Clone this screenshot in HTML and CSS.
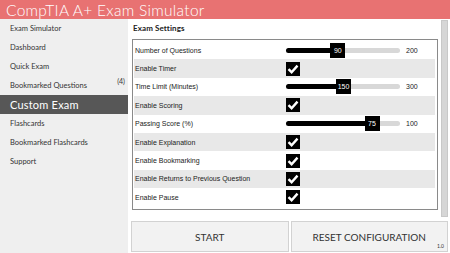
FILE: index.html
```html
<!DOCTYPE html>
<html>
<head>
<meta charset="utf-8">
<link rel="stylesheet" href="styles.css">
</head>
<body>
<div class="app">
  <div class="header">CompTIA A+ Exam Simulator</div>
  <div class="content">
    <div class="sidebar">
      <div class="nav-item">Exam Simulator</div>
      <div class="nav-item">Dashboard</div>
      <div class="nav-item">Quick Exam</div>
      <div class="nav-item">Bookmarked Questions<span class="count">(4)</span></div>
      <div class="nav-item active">Custom Exam</div>
      <div class="nav-item">Flashcards</div>
      <div class="nav-item">Bookmarked Flashcards</div>
      <div class="nav-item">Support</div>
    </div>
    <div class="main">
      <div class="scroll-area">
        <div class="settings">
          <div class="section-title">Exam Settings</div>
          <div class="box">
            <div class="row">
              <span class="label">Number of Questions</span>
              <div class="slider"><div class="track"><div class="fill" style="width:45%"></div><div class="thumb" style="left:45%">90</div></div><span class="max">200</span></div>
            </div>
            <div class="row alt">
              <span class="label">Enable Timer</span>
              <span class="check"><svg viewBox="0 0 14 14"><path d="M2.5 7.2 L5.6 10.2 L11.5 3.6" /></svg></span>
            </div>
            <div class="row">
              <span class="label">Time Limit (Minutes)</span>
              <div class="slider"><div class="track"><div class="fill" style="width:50%"></div><div class="thumb" style="left:50%">150</div></div><span class="max">300</span></div>
            </div>
            <div class="row alt">
              <span class="label">Enable Scoring</span>
              <span class="check"><svg viewBox="0 0 14 14"><path d="M2.5 7.2 L5.6 10.2 L11.5 3.6" /></svg></span>
            </div>
            <div class="row">
              <span class="label">Passing Score (%)</span>
              <div class="slider"><div class="track"><div class="fill" style="width:75%"></div><div class="thumb" style="left:75%">75</div></div><span class="max">100</span></div>
            </div>
            <div class="row alt">
              <span class="label">Enable Explanation</span>
              <span class="check"><svg viewBox="0 0 14 14"><path d="M2.5 7.2 L5.6 10.2 L11.5 3.6" /></svg></span>
            </div>
            <div class="row">
              <span class="label">Enable Bookmarking</span>
              <span class="check"><svg viewBox="0 0 14 14"><path d="M2.5 7.2 L5.6 10.2 L11.5 3.6" /></svg></span>
            </div>
            <div class="row alt">
              <span class="label">Enable Returns to Previous Question</span>
              <span class="check"><svg viewBox="0 0 14 14"><path d="M2.5 7.2 L5.6 10.2 L11.5 3.6" /></svg></span>
            </div>
            <div class="row">
              <span class="label">Enable Pause</span>
              <span class="check"><svg viewBox="0 0 14 14"><path d="M2.5 7.2 L5.6 10.2 L11.5 3.6" /></svg></span>
            </div>
          </div>
        </div>
        <div class="scrollbar"></div>
      </div>
      <div class="buttons">
        <div class="btn">START</div>
        <div class="btn">RESET CONFIGURATION<span class="version">1.0</span></div>
      </div>
    </div>
  </div>
</div>
</body>
</html>
```

FILE: styles.css
```css
html, body {
  margin: 0;
  padding: 0;
  background: #ffffff;
}
.app {
  width: 450px;
  height: 253px;
  overflow: hidden;
  display: flex;
  flex-direction: column;
  font-family: "Lato", "DejaVu Sans", sans-serif;
}
.header {
  height: 19px;
  background: #e87272;
  color: #ffffff;
  font-size: 15.5px;
  font-weight: 300;
  line-height: 20px;
  padding-left: 6px;
  letter-spacing: 0.3px;
  white-space: nowrap;
}
.content {
  flex: 1;
  display: flex;
  min-height: 0;
}
.sidebar {
  width: 128px;
  background: #efefef;
  box-sizing: border-box;
}
.nav-item {
  height: 19px;
  line-height: 19px;
  font-size: 7.5px;
  color: #333333;
  padding-left: 10px;
  position: relative;
  white-space: nowrap;
}
.count {
  position: absolute;
  right: 3px;
  top: -4px;
  font-size: 7px;
}
.nav-item.active {
  background: #575757;
  color: #ffffff;
  font-size: 11px;
  letter-spacing: 0.2px;
  padding-left: 10px;
}
.main {
  flex: 1;
  display: flex;
  flex-direction: column;
  min-width: 0;
}
.scroll-area {
  flex: 1;
  display: flex;
  min-height: 0;
}
.settings {
  flex: 1;
  padding: 0 2px 0 4px;
}
.section-title {
  height: 20px;
  line-height: 18px;
  font-size: 8px;
  font-weight: bold;
  color: #222;
  padding-left: 1px;
  letter-spacing: 0.1px;
}
.box {
  border: 1px solid #8a8a8a;
  padding: 1px 2px 2px 1px;
  font-family: "Liberation Sans", Arial, sans-serif;
}
.row {
  height: 18.4px;
  display: flex;
  align-items: center;
}
.row.alt {
  background: #e8e8e8;
}
.label {
  width: 151px;
  font-size: 7px;
  color: #222;
  padding-left: 1px;
  white-space: nowrap;
}
.slider {
  display: flex;
  align-items: center;
}
.track {
  position: relative;
  width: 114px;
  height: 5px;
  background: #d8d8d8;
  border-radius: 3px;
}
.fill {
  height: 5px;
  background: #000;
  border-radius: 3px 0 0 3px;
}
.thumb {
  position: absolute;
  top: -5px;
  height: 15px;
  width: 15px;
  margin-left: -7px;
  background: #000;
  color: #fff;
  font-size: 7px;
  line-height: 15px;
  text-align: center;
}
.max {
  font-size: 7px;
  color: #222;
  margin-left: 6px;
}
.check {
  width: 14px;
  height: 14px;
  background: #000;
  display: block;
}
.check svg {
  width: 14px;
  height: 14px;
  display: block;
  fill: none;
  stroke: #fff;
  stroke-width: 2.4;
}
.scrollbar {
  width: 5px;
  margin: 1px 2px 4px 1px;
  background: #d6d6d6;
  border: 1px solid #c8c8c8;
}
.buttons {
  height: 31px;
  display: flex;
  gap: 2px;
  padding: 0 2px 1px 3px;
}
.btn {
  flex: 1;
  background: #f2f2f2;
  border: 1px solid #d2d2d2;
  display: flex;
  align-items: center;
  justify-content: center;
  font-size: 10px;
  color: #333;
  position: relative;
}
.version {
  position: absolute;
  right: 3px;
  bottom: 2px;
  font-size: 5px;
}
```
